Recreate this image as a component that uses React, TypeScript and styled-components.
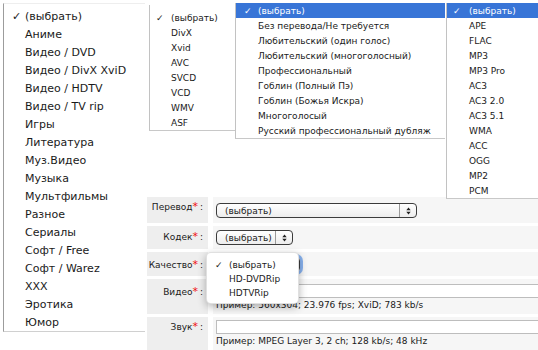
import React from "react";
import styled, { createGlobalStyle } from "styled-components";

const GlobalStyle = createGlobalStyle`
  html, body {
    margin: 0;
    padding: 0;
    background: #fff;
  }
`;

const Stage = styled.div`
  position: relative;
  width: 538px;
  height: 350px;
  overflow: hidden;
  background: #fff;
  font-family: "DejaVu Sans", Verdana, sans-serif;
  color: #1a1a1a;
`;

/* ---------- form ---------- */

const Form = styled.div`
  display: flex;
  flex-direction: column;
  gap: 3px;
  margin-left: 147px;
  padding-top: 197px;
`;

const Row = styled.div<{ $h: number }>`
  display: grid;
  grid-template-columns: 61px 1fr;
  column-gap: 5px;
  height: ${(p) => p.$h}px;
`;

const Label = styled.div<{ $top: number }>`
  background: #eeeeee;
  text-align: right;
  padding: ${(p) => p.$top}px 5px 0 0;
  font-size: 9px;
  line-height: 12px;
  white-space: nowrap;
`;

const Star = styled.span`
  color: #ee1111;
  font-size: 11px;
  line-height: 0;
  margin-right: 2px;
`;

const Value = styled.div<{ $top: number }>`
  background: #f6f6f6;
  padding: ${(p) => p.$top}px 0 0 3px;
  display: flex;
  flex-direction: column;
  align-items: flex-start;
  overflow: hidden;
`;

const Select = styled.div<{ $w: number; $focus?: boolean }>`
  display: flex;
  align-items: center;
  box-sizing: border-box;
  width: ${(p) => p.$w}px;
  height: 15px;
  border: 1px solid #3c3c3c;
  border-radius: 4px;
  background: linear-gradient(#ffffff, #ededed);
  font-size: 9px;
  box-shadow: ${(p) => (p.$focus ? "0 0 0 3px rgba(90, 150, 235, 0.7)" : "none")};
`;

const SelectText = styled.span`
  flex: 1;
  padding-left: 8px;
`;

const Arrows = styled.span`
  flex: none;
  width: 16px;
  height: 100%;
  border-left: 1px solid #9a9a9a;
  display: flex;
  align-items: center;
  justify-content: center;
`;

const Input = styled.div`
  box-sizing: border-box;
  width: 340px;
  height: 14px;
  border: 1px solid #bdbdbd;
  background: #fff;
  flex: none;
`;

const Hint = styled.div`
  font-size: 9px;
  line-height: 12px;
  margin-top: 1px;
  white-space: nowrap;
`;

/* ---------- popup menus ---------- */

const Menu = styled.ul<{ $x: number; $y: number; $w: number; $z: number }>`
  position: absolute;
  left: ${(p) => p.$x}px;
  top: ${(p) => p.$y}px;
  width: ${(p) => p.$w}px;
  z-index: ${(p) => p.$z};
  margin: 0;
  padding: 0;
  list-style: none;
  box-sizing: border-box;
  background: #fff;
  white-space: nowrap;
`;

const CategoryMenu = styled(Menu)`
  padding-top: 3px;
  font-size: 11px;
  border-left: 1px solid #9c9c9c;
  border-bottom: 1px solid #d0d0d0;
  border-top: 1px solid #eeeeee;
`;

const ListMenu = styled(Menu)<{ $pad: number }>`
  padding-top: ${(p) => p.$pad}px;
  font-size: 9px;
  border-left: 1px solid #c2c2c2;
  border-bottom: 1px solid #c8c8c8;
`;

const PopMenu = styled(Menu)`
  padding: 5px 0 3px;
  font-size: 9px;
  border: 1px solid rgba(0, 0, 0, 0.12);
  border-radius: 5px;
  box-shadow: 0 3px 9px rgba(0, 0, 0, 0.3);
`;

const Item = styled.li<{ $h: number; $pl: number; $active?: boolean }>`
  display: flex;
  align-items: center;
  height: ${(p) => p.$h}px;
  padding-left: ${(p) => p.$pl}px;
  background: ${(p) => (p.$active ? "#3875d7" : "transparent")};
  color: ${(p) => (p.$active ? "#fff" : "inherit")};
`;

const Check = styled.span<{ $w: number }>`
  flex: none;
  width: ${(p) => p.$w}px;
`;

const UpDown = () => (
  <svg width="5" height="8" viewBox="0 0 5 8">
    <path d="M0.3 3.3 L2.5 0.4 L4.7 3.3 Z M0.3 4.7 L2.5 7.6 L4.7 4.7 Z" fill="#222" />
  </svg>
);

const categories = [
  "(выбрать)",
  "Аниме",
  "Видео / DVD",
  "Видео / DivX XviD",
  "Видео / HDTV",
  "Видео / TV rip",
  "Игры",
  "Литература",
  "Муз.Видео",
  "Музыка",
  "Мультфильмы",
  "Разное",
  "Сериалы",
  "Софт / Free",
  "Софт / Warez",
  "XXX",
  "Эротика",
  "Юмор",
];

const codecs = ["(выбрать)", "DivX", "Xvid", "AVC", "SVCD", "VCD", "WMV", "ASF"];

const translations = [
  "(выбрать)",
  "Без перевода/Не требуется",
  "Любительский (один голос)",
  "Любительский (многоголосный)",
  "Профессиональный",
  "Гоблин (Полный Пэ)",
  "Гоблин (Божья Искра)",
  "Многоголосый",
  "Русский профессиональный дубляж",
];

const audio = [
  "(выбрать)",
  "APE",
  "FLAC",
  "MP3",
  "MP3 Pro",
  "AC3",
  "AC3 2.0",
  "AC3 5.1",
  "WMA",
  "ACC",
  "OGG",
  "MP2",
  "PCM",
];

const quality = ["(выбрать)", "HD-DVDRip", "HDTVRip"];

const renderItems = (
  list: string[],
  h: number,
  pl: number,
  cw: number,
  highlight = false
) =>
  list.map((text, i) => (
    <Item key={text} $h={h} $pl={pl} $active={highlight && i === 0}>
      <Check $w={cw}>{i === 0 ? "✓" : ""}</Check>
      {text}
    </Item>
  ));

export default function App() {
  return (
    <>
      <GlobalStyle />
      <Stage>
        <Form>
          <Row $h={26}>
            <Label $top={4}>
              Перевод<Star>*</Star>:
            </Label>
            <Value $top={6}>
              <Select $w={201}>
                <SelectText>(выбрать)</SelectText>
                <Arrows>
                  <UpDown />
                </Arrows>
              </Select>
            </Value>
          </Row>
          <Row $h={23}>
            <Label $top={5}>
              Кодек<Star>*</Star>:
            </Label>
            <Value $top={4}>
              <Select $w={77}>
                <SelectText>(выбрать)</SelectText>
                <Arrows>
                  <UpDown />
                </Arrows>
              </Select>
            </Value>
          </Row>
          <Row $h={24}>
            <Label $top={7}>
              Качество<Star>*</Star>:
            </Label>
            <Value $top={5}>
              <Select $w={84} $focus>
                <SelectText>(выбрать)</SelectText>
                <Arrows>
                  <UpDown />
                </Arrows>
              </Select>
            </Value>
          </Row>
          <Row $h={35}>
            <Label $top={7}>
              Видео<Star>*</Star>:
            </Label>
            <Value $top={5}>
              <Input />
              <Hint>Пример: 560x304; 23.976 fps; XviD; 783 kb/s</Hint>
            </Value>
          </Row>
          <Row $h={36}>
            <Label $top={4}>
              Звук<Star>*</Star>:
            </Label>
            <Value $top={3}>
              <Input />
              <Hint>Пример: MPEG Layer 3, 2 ch; 128 kb/s; 48 kHz</Hint>
            </Value>
          </Row>
        </Form>

        <CategoryMenu $x={3} $y={3} $w={142} $z={1}>
          {renderItems(categories, 18, 8, 13)}
        </CategoryMenu>
        <ListMenu $x={149} $y={5} $w={100} $z={2} $pad={5}>
          {renderItems(codecs, 15, 6, 15)}
        </ListMenu>
        <ListMenu $x={235} $y={3} $w={210} $z={3} $pad={0}>
          {renderItems(translations, 15, 8, 14, true)}
        </ListMenu>
        <ListMenu $x={446} $y={3} $w={120} $z={4} $pad={0}>
          {renderItems(audio, 15, 6, 16, true)}
        </ListMenu>
        <PopMenu $x={206} $y={252} $w={93} $z={5}>
          {renderItems(quality, 14, 8, 14)}
        </PopMenu>
      </Stage>
    </>
  );
}
